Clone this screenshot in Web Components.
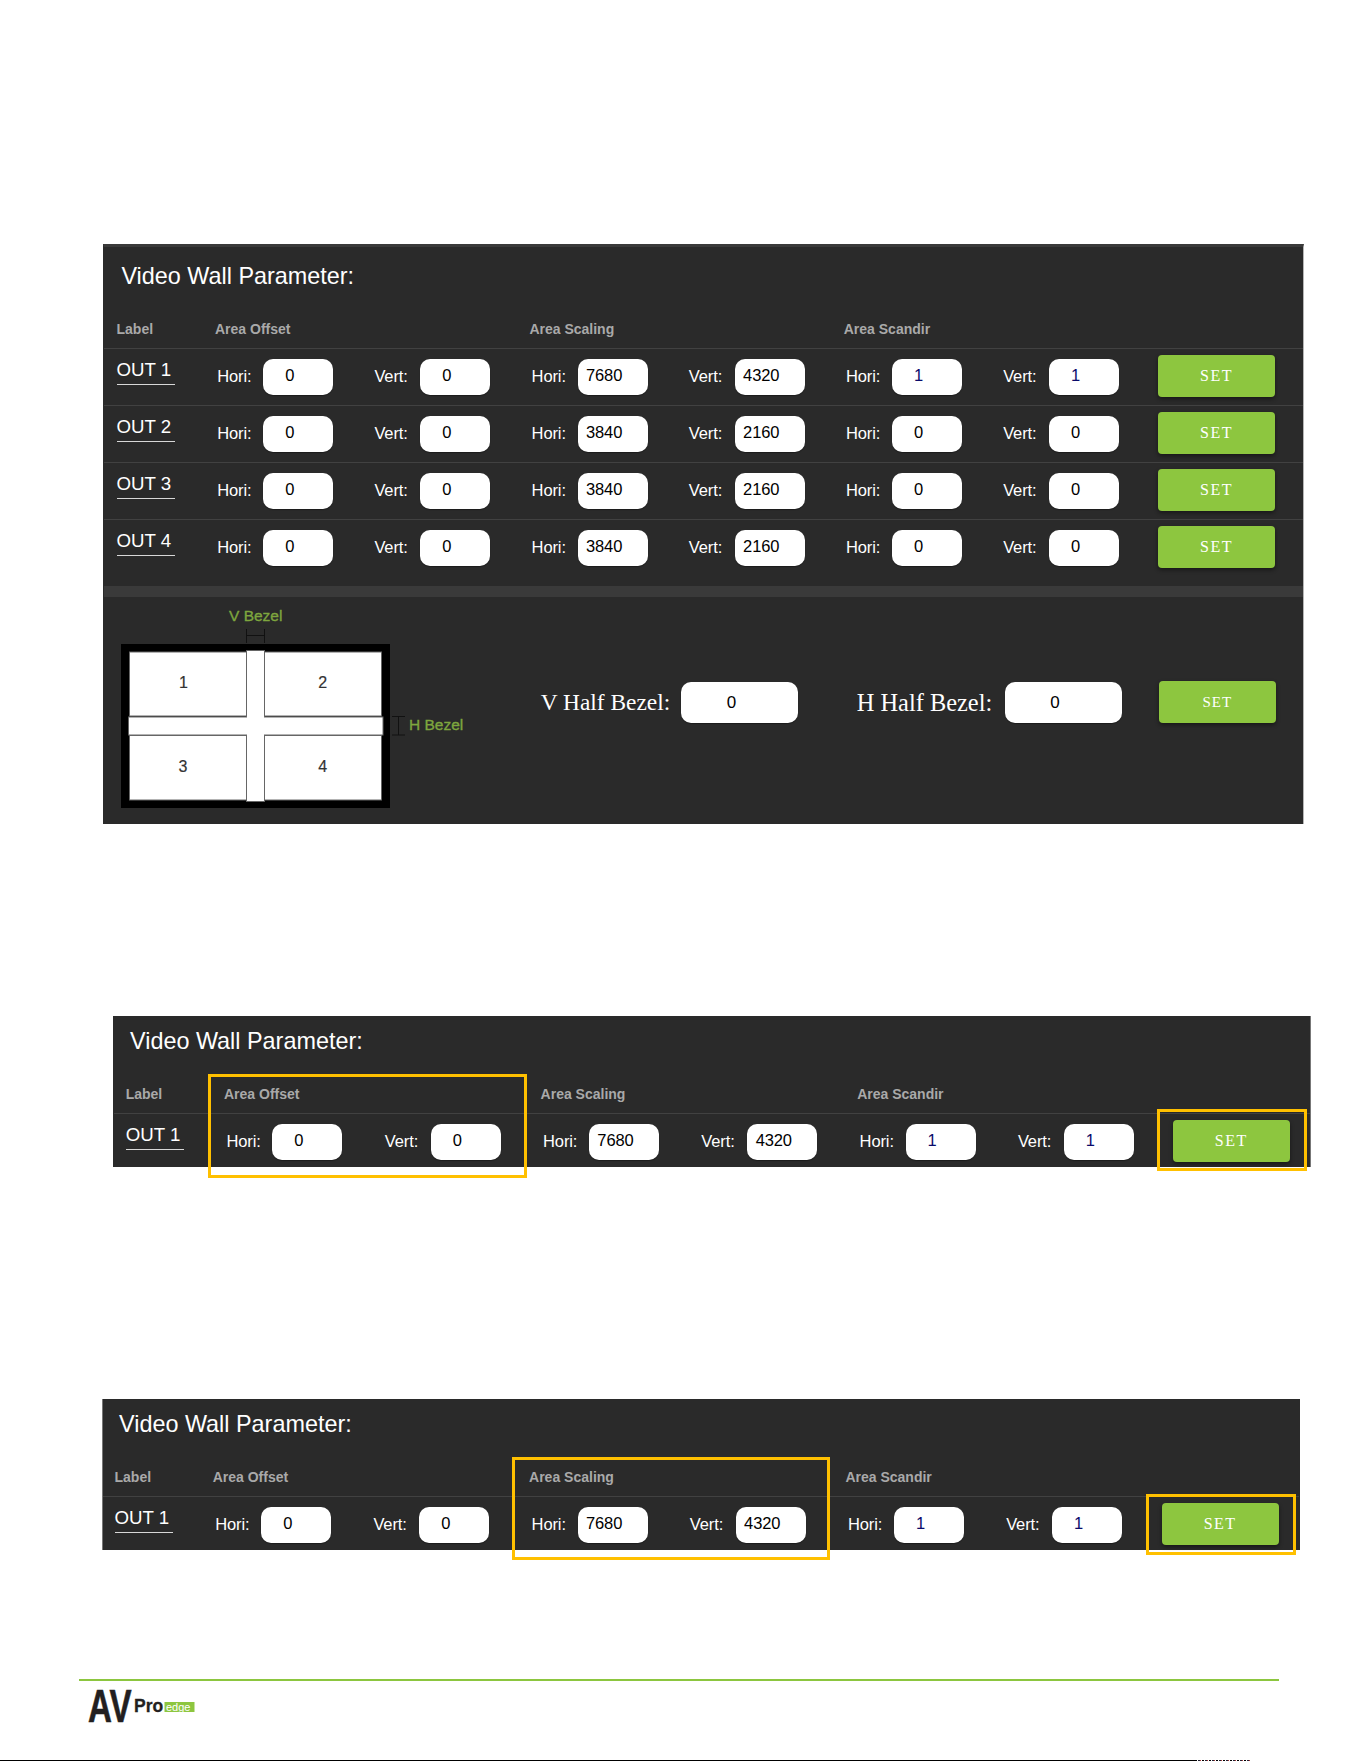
<!DOCTYPE html>
<html lang="en">
<head>
<meta charset="utf-8">
<title>Video Wall Parameter</title>
<style>
html,body{margin:0;padding:0;background:#fff}
body{font-family:"Liberation Sans",Arial,sans-serif}
</style>
</head>
<body>
<vw-page>
  <vw-panel title="Video Wall Parameter:" variant="full" style="--ml:103px;--mt:244px;--w:1200.5px;--lc:113.2px;--f:157.2px;--set-r:27.5px;--row-h:57px;--lab-ml:12.5px;--gr-ml:-2.2px;--edge-r:#b5b5b5;--edge-l:#2a2a2a">
    <vw-head></vw-head>
    <vw-row label="OUT 1" values="0,0,7680,4320,1,1"></vw-row>
    <vw-row label="OUT 2" values="0,0,3840,2160,0,0"></vw-row>
    <vw-row label="OUT 3" values="0,0,3840,2160,0,0"></vw-row>
    <vw-row label="OUT 4" values="0,0,3840,2160,0,0" style="--row-h:67px"></vw-row>
    <vw-bezel></vw-bezel>
  </vw-panel>

  <vw-panel title="Video Wall Parameter:" style="--ml:113px;--mt:192px;--w:1197.5px;--lc:112.4px;--f:158.3px;--set-r:19.7px;--row-h:53.4px;--lab-ml:11.7px;--gr-ml:-2.4px;--edge-r:#777;--edge-l:#2a2a2a">
    <vw-head></vw-head>
    <vw-row label="OUT 1" values="0,0,7680,4320,1,1"></vw-row>
    <vw-mark style="left:94px;top:58px;width:319px;height:104px"></vw-mark>
    <vw-mark style="left:1043px;top:93px;width:150px;height:62px"></vw-mark>
  </vw-panel>

  <vw-panel title="Video Wall Parameter:" style="--ml:102px;--mt:232.3px;--w:1198px;--lc:112.2px;--f:158.2px;--set-r:20.4px;--row-h:53.7px;--lab-ml:11.5px;--gr-ml:-2.5px;--edge-l:#777;--edge-r:#2a2a2a">
    <vw-head></vw-head>
    <vw-row label="OUT 1" values="0,0,7680,4320,1,1"></vw-row>
    <vw-mark style="left:409px;top:58px;width:318px;height:102.7px"></vw-mark>
    <vw-mark style="left:1043px;top:95px;width:150px;height:60.7px"></vw-mark>
  </vw-panel>

  <vw-footer></vw-footer>
</vw-page>

<script>
function shadow(el, html){
  const r = el.attachShadow({mode:'open'});
  r.innerHTML = html;
  return r;
}
const SANS = '"Liberation Sans",Arial,sans-serif';
const SERIF = '"Liberation Serif","Times New Roman",serif';

class VwPage extends HTMLElement{
  constructor(){super();shadow(this,`<style>
    :host{display:flex;flex-direction:column;width:1361px;height:1761px;overflow:hidden;background:#fff}
  </style><slot></slot>`);}
}
class VwPanel extends HTMLElement{
  constructor(){super();
    shadow(this,`<style>
      :host{display:block;position:relative;box-sizing:border-box;flex:none;
        margin-left:var(--ml);margin-top:var(--mt);width:var(--w);background:#2a2a2a;color:#fff;
        font-family:${SANS};border-left:1px solid var(--edge-l);border-right:1px solid var(--edge-r)}
      :host([variant="full"]){border-top:3px solid #3a3a3a}
      .title{font-size:23.4px;line-height:30px;height:30px;padding:10px 0 0 16px;margin:0;font-weight:400;color:#fff}
      :host([variant="full"]) .title{padding-top:14px;padding-left:17.4px}
    </style><div class="title"></div><slot></slot>`);
  }
  connectedCallback(){this.shadowRoot.querySelector('.title').textContent=this.getAttribute('title');}
}
class VwHead extends HTMLElement{
  constructor(){super();shadow(this,`<style>
    :host{display:grid;grid-template-columns:var(--lc) repeat(6,var(--f)) minmax(0,1fr);height:57.3px;box-sizing:border-box;padding-top:29px;
      font:700 14px/18px ${SANS};color:#a9a9a9}
    .l{margin-left:var(--lab-ml)}
    .g{grid-column:span 2;margin-left:var(--gr-ml)}
  </style><div class="l">Label</div><div class="g">Area Offset</div><div class="g">Area Scaling</div><div class="g">Area Scandir</div>`);}
}
class VwValue extends HTMLElement{
  constructor(){super();shadow(this,`<style>
    :host{display:block;box-sizing:border-box;width:70px;height:36px;background:#fff;border-radius:10px;
      color:#000;font:400 16.5px/33.5px ${SANS};text-align:center;padding-right:17px;box-shadow:0 1px 1px rgba(0,0,0,.35)}
    :host([big]){width:117px;height:41px;line-height:41px;font-size:17px;padding-right:16px}
    :host([navy]){color:#0a0a6a}
  </style><slot></slot>`);}
}
class VwField extends HTMLElement{
  constructor(){super();shadow(this,`<style>
    :host{display:grid;grid-template-columns:46px 70px;align-items:center;height:36px;margin-top:10.7px;
      font:400 16.5px/35px ${SANS};color:#fff;letter-spacing:-.1px}
  </style><span class="t"></span><slot></slot>`);}
  connectedCallback(){this.shadowRoot.querySelector('.t').textContent=this.getAttribute('name');}
}
class VwSet extends HTMLElement{
  constructor(){super();shadow(this,`<style>
    :host{display:flex;align-items:center;justify-content:center;width:117px;height:42px;background:#8dc63f;border-radius:4px;
      color:#fff;font:400 16px/1 ${SERIF};letter-spacing:1.5px;box-shadow:0 2px 4px rgba(0,0,0,.45)}
    :host([small]){font-size:15px;letter-spacing:1px}
  </style><slot></slot>`);}
}
class VwRow extends HTMLElement{
  constructor(){super();
    shadow(this,`<style>
      :host{display:grid;grid-template-columns:var(--lc) repeat(6,var(--f)) minmax(0,1fr);height:var(--row-h);box-sizing:border-box;
        border-top:1px solid #414141;align-items:start}
      .lab{margin:10.5px 0 0 var(--lab-ml);width:58px;box-sizing:border-box;font:400 18.7px/20px ${SANS};color:#fff;padding-bottom:4.5px;border-bottom:1px solid #d8d8d8}
      vw-set{justify-self:end;margin:5.3px var(--set-r) 0 0}
    </style><div class="lab"></div><span id="fields" style="display:contents"></span><vw-set>SET</vw-set>`);
  }
  connectedCallback(){
    const r=this.shadowRoot;
    r.querySelector('.lab').textContent=this.getAttribute('label');
    const vals=this.getAttribute('values').split(',');
    r.getElementById('fields').innerHTML=vals.map((v,i)=>{
      const navy=(i>=4&&v==='1')?' navy':'';
      return `<vw-field name="${i%2?'Vert:':'Hori:'}" style="margin-top:9.7px"><vw-value${navy}>${v}</vw-value></vw-field>`;
    }).join('');
  }
}
class VwMark extends HTMLElement{
  constructor(){super();shadow(this,`<style>
    :host{display:block;position:absolute;box-sizing:border-box;border:3px solid #ffc000;pointer-events:none}
  </style>`);}
}
class VwDiagram extends HTMLElement{
  constructor(){super();shadow(this,`<style>
    :host{display:block;flex:none;width:350px;height:205px}
    svg{display:block}
    text{font-family:${SANS}}
    .g{fill:#7ea63e;font-size:15.5px;font-weight:400;stroke:#7ea63e;stroke-width:.35px}
    .n{fill:#333;font-size:16px;text-anchor:middle;stroke:#333;stroke-width:.2px}
    .c{fill:#fff;stroke:#666;stroke-width:1}
    .b{stroke:#111;stroke-width:1;fill:none}
  </style>
  <svg width="350" height="205" viewBox="0 0 350 205" xmlns="http://www.w3.org/2000/svg">
    <rect x="0" y="37" width="269" height="164" fill="#000"/>
    <rect class="c" x="8.5" y="45" width="117" height="64"/>
    <rect class="c" x="143.5" y="45" width="117" height="64"/>
    <rect class="c" x="8.5" y="128.5" width="117" height="64.5"/>
    <rect class="c" x="143.5" y="128.5" width="117" height="64.5"/>
    <rect class="c" x="125.5" y="43.5" width="18" height="151"/>
    <rect class="c" x="7.5" y="110" width="254.5" height="18"/>
    <rect x="126" y="109" width="17" height="20" fill="#fff"/>
    <text class="g" x="134.7" y="13.5" text-anchor="middle">V Bezel</text>
    <path class="b" d="M125.5 22V36M143.5 22V36M125.5 28.5H143.5"/>
    <path class="b" d="M271 109.5H284M271 128H284M277.5 109.5V128"/>
    <text class="g" x="288" y="123">H Bezel</text>
    <text class="n" x="62.5" y="81">1</text>
    <text class="n" x="201.6" y="81">2</text>
    <text class="n" x="62" y="165">3</text>
    <text class="n" x="201.6" y="165">4</text>
  </svg>`);}
}
class VwBezel extends HTMLElement{
  constructor(){super();shadow(this,`<style>
    :host{display:flex;align-items:flex-start;box-sizing:border-box;height:237.7px;border-top:11px solid #3a3a3a;padding:9.5px 0 0 16.9px}
    .ctl{display:flex;align-items:center;margin-top:74.5px;font:400 23.4px/41px ${SERIF};color:#fff}
    .a{margin-left:69.8px}
    .b{margin-left:58.9px;font-size:24.4px}
    .lbl{width:140.2px;padding-bottom:0}
    .lbl2{width:147.8px;padding-bottom:0}
    vw-set{margin-left:37.2px}
  </style>
  <vw-diagram></vw-diagram>
  <div class="ctl">
    <span class="lbl a">V Half Bezel:</span><vw-value big>0</vw-value>
    <span class="lbl2 b">H Half Bezel:</span><vw-value big>0</vw-value>
    <vw-set small>SET</vw-set>
  </div>`);}
}
class VwLogo extends HTMLElement{
  constructor(){super();shadow(this,`<style>
    :host{display:block;width:112px;height:52px;margin:-1px 0 0 87.7px}
    svg{display:block}
    text{font-family:${SANS};font-weight:700}
  </style>
  <svg width="112" height="52" viewBox="0 -9 112 52" xmlns="http://www.w3.org/2000/svg">
    <text transform="translate(0,33) scale(.72,1)" font-size="46" fill="#231f20" stroke="#231f20" stroke-width=".6">AV</text>
    <text x="46" y="23" font-size="17.5" fill="#231f20" stroke="#231f20" stroke-width=".3">Pro</text>
    <rect x="76.5" y="13" width="30" height="10" fill="#8dc63f"/>
    <text x="78" y="21.5" font-size="11" fill="#fff" style="font-weight:400">edge</text>
  </svg>`);}
}
class VwFooter extends HTMLElement{
  constructor(){super();shadow(this,`<style>
    :host{display:flex;flex-direction:column;flex:1;margin-top:129.5px;min-height:0}
    .rule{margin-left:79px;width:1200px;height:1.5px;background:#8cc63f}
    .base{margin-top:auto;margin-bottom:.5px;display:flex;height:1px}
    .k{width:1195px;background:#000}
    .n{width:56px;background:repeating-linear-gradient(90deg,#000 0 2px,#fff 2px 3px,#223 3px 5px,#a33 5px 6px,#fff 6px 7px)}
  </style>
  <div class="rule"></div>
  <vw-logo></vw-logo>
  <div class="base"><div class="k"></div><div class="n"></div></div>`);}
}
[['vw-page',VwPage],['vw-panel',VwPanel],['vw-head',VwHead],['vw-value',VwValue],['vw-field',VwField],['vw-set',VwSet],
 ['vw-row',VwRow],['vw-mark',VwMark],['vw-diagram',VwDiagram],['vw-bezel',VwBezel],['vw-logo',VwLogo],['vw-footer',VwFooter]]
 .forEach(([n,c])=>customElements.define(n,c));
</script>
</body>
</html>
